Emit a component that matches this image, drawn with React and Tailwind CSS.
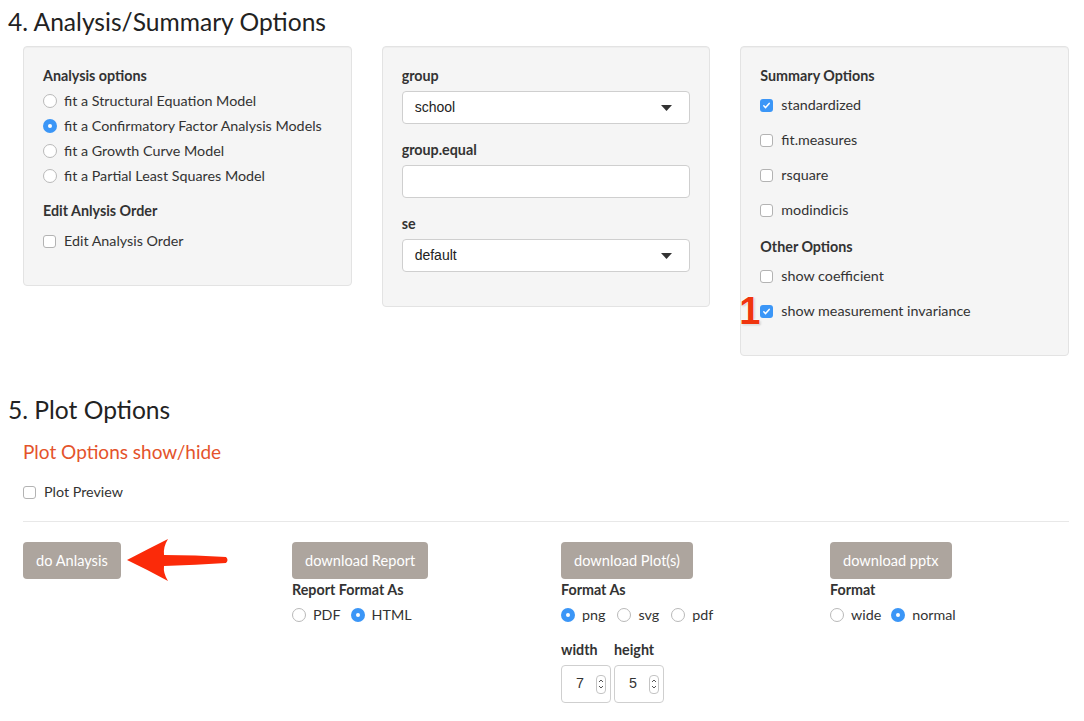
import React from 'react'

const font = "font-['Lato','Open_Sans',sans-serif]"

function Radio({ checked }) {
  return checked ? (
    <span className="flex h-[14px] w-[14px] shrink-0 items-center justify-center rounded-full bg-[#3b96f7]">
      <span className="h-[4px] w-[4px] rounded-full bg-white" />
    </span>
  ) : (
    <span className="h-[14px] w-[14px] shrink-0 rounded-full border border-[#b9b9b9] bg-white" />
  )
}

function Check({ checked }) {
  return checked ? (
    <span className="flex h-[13px] w-[13px] shrink-0 items-center justify-center rounded-[3px] bg-[#3b96f7]">
      <svg width="9" height="9" viewBox="0 0 9 9">
        <path d="M1.8 4.8 L3.6 6.6 L7.2 2.4" fill="none" stroke="white" strokeWidth="1.5" strokeLinecap="round" strokeLinejoin="round" />
      </svg>
    </span>
  ) : (
    <span className="h-[13px] w-[13px] shrink-0 rounded-[3px] border border-[#b3b3b3] bg-white" />
  )
}

function RadioRow({ checked, children }) {
  return (
    <div className="flex h-[20px] items-center gap-[7px]">
      <Radio checked={checked} />
      <span>{children}</span>
    </div>
  )
}

function CheckRow({ checked, children, className = '' }) {
  return (
    <div className={`flex h-[20px] items-center gap-[8px] ${className}`}>
      <Check checked={checked} />
      <span>{children}</span>
    </div>
  )
}

function Label({ children, className = '' }) {
  return <div className={`h-[20px] leading-[20px] font-bold ${className}`}>{children}</div>
}

function Select({ value }) {
  return (
    <div className="flex h-[33px] items-center justify-between rounded-[4px] border border-[#cfcfcf] bg-white pl-[12px] pr-[17px] font-['Liberation_Sans',Arial,sans-serif] text-[14px] text-[#222]">
      <span>{value}</span>
      <svg width="11" height="6" viewBox="0 0 11 6">
        <path d="M0 0 H11 L5.5 6 Z" fill="#333" />
      </svg>
    </div>
  )
}

function Well({ children, className = '' }) {
  return (
    <div className={`rounded-[4px] border border-[#e3e3e3] bg-[#f5f5f5] p-[19px] shadow-[inset_0_1px_1px_rgba(0,0,0,0.03)] ${className}`}>
      {children}
    </div>
  )
}

function Button({ children }) {
  return (
    <div className="inline-flex h-[37px] items-center rounded-[4px] bg-[#ada59e] px-[13px] text-[14.6px] text-white">
      {children}
    </div>
  )
}

function NumberBox({ value }) {
  return (
    <div className="flex h-[38px] w-[50px] items-center justify-between rounded-[4px] border border-[#cfcfcf] bg-white pl-[14px] pr-[4px] font-['Liberation_Sans',Arial,sans-serif]">
      <span>{value}</span>
      <span className="flex h-[19px] w-[10px] flex-col items-center justify-center rounded-[4px] border border-[#c4c4c4]">
        <svg width="6" height="12" viewBox="0 0 6 12">
          <path d="M1 4 L3 2 L5 4 M1 8 L3 10 L5 8" fill="none" stroke="#555" strokeWidth="1" />
        </svg>
      </span>
    </div>
  )
}

export default function App() {
  return (
    <div className={`${font} min-h-[721px] bg-white pl-[8px] text-[14.3px] text-[#333]`}>
      <h2 className="pt-[8px] text-[24.6px] leading-[28px] text-[#222]">4. Analysis/Summary Options</h2>

      <div className="mt-[10px] grid grid-cols-3 items-start">
        <div className="px-[15px]">
          <Well className="pb-[34px]">
            <Label className="mb-[5px]">Analysis options</Label>
            <div className="flex flex-col gap-[5px]">
              <RadioRow>fit a Structural Equation Model</RadioRow>
              <RadioRow checked>fit a Confirmatory Factor Analysis Models</RadioRow>
              <RadioRow>fit a Growth Curve Model</RadioRow>
              <RadioRow>fit a Partial Least Squares Model</RadioRow>
            </div>
            <Label className="mt-[15px] mb-[10px]">Edit Anlysis Order</Label>
            <CheckRow>Edit Analysis Order</CheckRow>
          </Well>
        </div>

        <div className="px-[15px]">
          <Well className="pb-[34px]">
            <Label className="mb-[5px]">group</Label>
            <Select value="school" />
            <Label className="mt-[16px] mb-[5px]">group.equal</Label>
            <div className="h-[33px] rounded-[4px] border border-[#cfcfcf] bg-white" />
            <Label className="mt-[16px] mb-[5px]">se</Label>
            <Select value="default" />
          </Well>
        </div>

        <div className="px-[15px]">
          <Well className="relative pb-[34px]">
            <Label>Summary Options</Label>
            <div className="mt-[9px] flex flex-col gap-[15px]">
              <CheckRow checked>standardized</CheckRow>
              <CheckRow>fit.measures</CheckRow>
              <CheckRow>rsquare</CheckRow>
              <CheckRow>modindicis</CheckRow>
            </div>
            <Label className="mt-[17px]">Other Options</Label>
            <div className="mt-[9px] flex flex-col gap-[15px]">
              <CheckRow>show coefficient</CheckRow>
              <CheckRow checked>show measurement invariance</CheckRow>
            </div>
            <span className="absolute left-[-2px] top-[245px] font-['Liberation_Sans',Arial,sans-serif] text-[38px] font-bold leading-none text-[#f0350f] [text-shadow:0_0_2px_white,0_0_2px_white,1px_1px_2px_rgba(0,0,0,0.25)]">
              1
            </span>
          </Well>
        </div>
      </div>

      <h2 className="mt-[40px] text-[24.6px] leading-[28px] text-[#222]">5. Plot Options</h2>

      <div className="px-[15px]">
        <div className="mt-[17px] text-[19px] leading-[22px] text-[#e4532b]">Plot Options show/hide</div>
        <CheckRow className="mt-[19px]">Plot Preview</CheckRow>
        <div className="mt-[19px] border-t border-[#e8e8e8]" />
      </div>

      <div className="relative mt-[20px] grid grid-cols-4">
        <div className="px-[15px]">
          <Button>do Anlaysis</Button>
        </div>
        <div className="px-[15px]">
          <Button>download Report</Button>
          <Label className="mt-[1px]">Report Format As</Label>
          <div className="mt-[5px] flex items-center gap-[10px]">
            <RadioRow>PDF</RadioRow>
            <RadioRow checked>HTML</RadioRow>
          </div>
        </div>
        <div className="px-[15px]">
          <Button>download Plot(s)</Button>
          <Label className="mt-[1px]">Format As</Label>
          <div className="mt-[5px] flex items-center gap-[12px]">
            <RadioRow checked>png</RadioRow>
            <RadioRow>svg</RadioRow>
            <RadioRow>pdf</RadioRow>
          </div>
          <div className="mt-[15px] flex gap-[3px]">
            <div>
              <Label className="mb-[5px]">width</Label>
              <NumberBox value="7" />
            </div>
            <div>
              <Label className="mb-[5px]">height</Label>
              <NumberBox value="5" />
            </div>
          </div>
        </div>
        <div className="px-[15px]">
          <Button>download pptx</Button>
          <Label className="mt-[1px]">Format</Label>
          <div className="mt-[5px] flex items-center gap-[10px]">
            <RadioRow>wide</RadioRow>
            <RadioRow checked>normal</RadioRow>
          </div>
        </div>

        <svg className="absolute left-[118px] top-[-4px]" width="104" height="44" viewBox="0 0 104 44">
          <path
            d="M1 22 Q22 11 42 1 Q37 9 38 17 Q70 17 100 19 Q103 22 100 25 Q70 27 38 28 Q37 35 42 43 Q22 32 1 22 Z"
            fill="#fb2a09"
          />
        </svg>
      </div>
    </div>
  )
}
